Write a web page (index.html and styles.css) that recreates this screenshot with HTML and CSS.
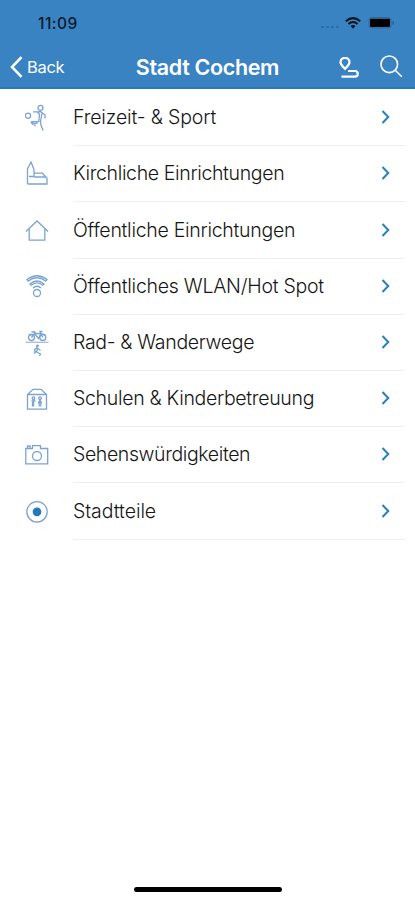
FILE: index.html
```html
<!DOCTYPE html>
<html lang="de">
<head>
<meta charset="utf-8">
<meta name="viewport" content="width=device-width, initial-scale=1">
<title>Stadt Cochem</title>
<link rel="stylesheet" href="styles.css">
</head>
<body>
<header class="header">
  <div class="status">
    <span class="time">11:09</span>
    <div class="status-icons">
      <span class="signal"><i></i><i></i><i></i><i></i></span>
      <svg class="wifi" viewBox="0 0 16 12" fill="none" stroke="#071523" stroke-width="2"><path d="M.8 4.200Q8-2 15.200 4.200M3.400 7Q8 3 12.600 7"/><path d="M5.500 9Q8 7 10.500 9L8 11.700Z" fill="#071523" stroke="none"/></svg>
      <svg class="battery" viewBox="0 0 26 12"><rect x=".5" y=".5" width="22" height="10.500" rx="2.500" fill="none" stroke="#2c689c"/><rect x="1.500" y="1.700" width="20" height="8.300" rx="1" fill="#000"/><path d="M24 4v4q1.500-.6 1.500-2T24 4" fill="#245b8b"/></svg>
    </div>
  </div>
  <nav class="nav">
    <a class="back"><svg class="back-icon" viewBox="0 0 13 22"><path d="M11.500 1.200 2 11l9.500 9.800"/></svg><span>Back</span></a>
    <h1 class="title">Stadt Cochem</h1>
    <div class="actions">
      <svg class="route" viewBox="0 0 20 22"><path d="M6 11.800C4.500 10 1.500 8 1.500 5.300a4.500 4.500 0 0 1 9 0C10.500 8 7.500 10 6 11.800Z"/><path d="M9 14h7a2.800 2.800 0 0 1 0 5.600H2.500"/></svg>
      <svg class="search" viewBox="0 0 23 23"><circle cx="9.300" cy="9.300" r="8.300"/><path d="m15.500 15.500 6.300 6.300"/></svg>
    </div>
  </nav>
</header>
<main class="list">
  <a class="row"><svg class="icon" viewBox="0 0 24 28"><circle cx="15.500" cy="3.800" r="2.500"/><circle cx="3" cy="11.700" r="2.600"/><path d="M8 7.800h4.500l3-.3 4.500 3.500v3.500M12.500 8.500l2 1.500-.7 7.500-6.800.2 3.500 4.500M17 9.500l-1.500 8 .6 4 2 5M6 18l1.500 2 5-1"/></svg><span class="cell"><span class="label l1">Freizeit- &amp; Sport</span><svg class="chevron" viewBox="0 0 9 14"><path d="m1.500 1 5.800 6-5.800 6"/></svg></span></a>
  <a class="row"><svg class="icon" viewBox="0 0 24 28"><path d="M2.500 24V9L6 2l3 7.500v3.700h8.500l4.500 5V24H2.500M9 13v3.500H4M9 17h12"/></svg><span class="cell"><span class="label l2">Kirchliche Einrichtungen</span><svg class="chevron" viewBox="0 0 9 14"><path d="m1.500 1 5.800 6-5.800 6"/></svg></span></a>
  <a class="row"><svg class="icon" viewBox="0 0 24 28"><path d="M1 14.500 12 4l11 10.500M4.200 11.800v11.400h15.600V11.800"/></svg><span class="cell"><span class="label l3">Öffentliche Einrichtungen</span><svg class="chevron" viewBox="0 0 9 14"><path d="m1.500 1 5.800 6-5.800 6"/></svg></span></a>
  <a class="row"><svg class="icon" viewBox="0 0 24 28"><path d="M2 6.500q10-7.500 20 0l-1.300 1.500q-8.700-6.500-17.400 0ZM5 11q7-6 14 0l-1.200 1.200q-5.800-4.800-11.600 0ZM8 15q4-3.500 8 0"/><circle cx="12" cy="20" r="3.500"/></svg><span class="cell"><span class="label l4">Öffentliches WLAN/Hot Spot</span><svg class="chevron" viewBox="0 0 9 14"><path d="m1.500 1 5.800 6-5.800 6"/></svg></span></a>
  <a class="row"><svg class="icon" viewBox="0 0 24 28"><circle cx="6.500" cy="8.500" r="3"/><circle cx="17.800" cy="8.500" r="3"/><path d="m6.500 8.500 3-4h6l2.300 4M9.500 4.500l4 5 2.500-5-1-2h2.500M6.500 3h4M4 5.500l4 .3M16.500 4.800l4 1"/><path d="M.5 13.300h23" opacity=".7"/><circle cx="12.500" cy="17" r=".8"/><path d="M12 18.500l-2.500 2 .5 2.500M12.500 18.500l-.8 4.500 3.800 2-1 2M11.700 22 9 24.500M13 19.500l2.500 2"/></svg><span class="cell"><span class="label l5">Rad- &amp; Wanderwege</span><svg class="chevron" viewBox="0 0 9 14"><path d="m1.500 1 5.800 6-5.800 6"/></svg></span></a>
  <a class="row"><svg class="icon" viewBox="0 0 24 28"><path d="M2.500 9.500v14.700h19V9.500ZM2.500 9.500 8 4.300h8l5.500 5.200"/><circle cx="8.500" cy="13.200" r="1.300"/><circle cx="15" cy="13.200" r="1.300"/><path d="M6.500 16h4M8.500 15v6.500M7.500 17v4.500M13 17.500h4M15 15l-1.500 2.500M15 15l1.500 2.500M14.200 17.500v4M15.800 17.500v4"/></svg><span class="cell"><span class="label l6">Schulen &amp; Kinderbetreuung</span><svg class="chevron" viewBox="0 0 9 14"><path d="m1.500 1 5.800 6-5.800 6"/></svg></span></a>
  <a class="row"><svg class="icon" viewBox="0 0 24 28"><path d="M.8 7.500h6.700V4.700h8v2.800h7.200v15.300H.8ZM2.500 7.500V5h2.500v2.500"/><circle cx="12" cy="15" r="4.500"/></svg><span class="cell"><span class="label l7">Sehenswürdigkeiten</span><svg class="chevron" viewBox="0 0 9 14"><path d="m1.500 1 5.800 6-5.800 6"/></svg></span></a>
  <a class="row"><svg class="icon" viewBox="0 0 24 28"><circle cx="12" cy="13.800" r="10.200"/><circle cx="12" cy="13.800" r="3.700" fill="#2479bd" stroke="#2479bd"/></svg><span class="cell"><span class="label l8">Stadtteile</span><svg class="chevron" viewBox="0 0 9 14"><path d="m1.500 1 5.800 6-5.800 6"/></svg></span></a>
</main>
<footer class="footer"><div class="home"></div></footer>
</body>
</html>
```
FILE: styles.css
```css
* { box-sizing: border-box; }
body {
  margin: 0;
  height: 900px;
  display: flex;
  flex-direction: column;
  background: #fff;
  color: #161616;
  font-family: Inter, "Liberation Sans", sans-serif;
  overflow: hidden;
}
svg { display: block; flex: none; }
.header {
  height: 88.500px;
  background: #3983c2;
  border-bottom: 2px solid #2779bc;
}
.status {
  height: 45px;
  display: flex;
  justify-content: space-between;
  padding: 0 20px 0 38px;
  align-items: center;
}
.time { font-size: 15.500px; font-weight: 500; letter-spacing: .5px; padding-top: 1px; color: #071a2c; }
.status-icons { display: flex; align-items: center; }
.signal { display: flex; gap: 2px; margin: 8px 6px 0 0; }
.signal i { width: 3px; height: 2px; background: #2f6fa6; }
.wifi { width: 16px; height: 12px; margin-right: 7px; }
.battery { width: 27px; height: 12px; }
.nav {
  height: 43px;
  display: grid;
  grid-template-columns: 100px 1fr 100px;
  align-items: center;
  padding: 0 12px 0 10px;
  color: #fff;
}
.back { display: flex; align-items: center; gap: 4px; font-size: 16.500px; letter-spacing: -.3px; }
.back-icon { width: 13px; height: 22px; fill: none; stroke: #fff; stroke-width: 2.600; }
.title { margin: 0; padding-left: 2px; font-size: 21.500px; font-weight: 600; letter-spacing: -.35px; text-align: center; white-space: nowrap; }
.actions { display: flex; justify-content: flex-end; gap: 21px; align-items: center; }
.actions svg { fill: none; stroke: #fff; }
.route { width: 20px; height: 22px; margin-top: 2px; stroke-width: 2.200; }
.search { width: 23px; height: 23px; stroke-width: 1.600; }
.list { padding-top: 1.600px; }
.row {
  height: 56.200px;
  display: flex;
  align-items: center;
  padding: 0 10px 0 25px;
}
.icon {
  width: 24px;
  height: 28px;
  margin-right: 24px;
  fill: none;
  stroke: #7ba4d2;
  stroke-width: 1.300;
}
.cell {
  flex: 1;
  height: 100%;
  display: flex;
  align-items: center;
  justify-content: space-between;
  border-bottom: 1px solid #f0f0f0;
}
.label { font-size: 19.500px; font-weight: 300; white-space: nowrap; padding-bottom: 1px; }
.l1 { letter-spacing: -.15px; }
.l2 { letter-spacing: -.36px; }
.l3 { letter-spacing: -.28px; }
.l4 { letter-spacing: -.25px; }
.l5 { letter-spacing: -.33px; }
.l6 { letter-spacing: -.31px; }
.l7 { letter-spacing: -.39px; }
.l8 { letter-spacing: -.07px; }
.chevron {
  width: 9px;
  height: 14px;
  margin: 0 15px 1px 0;
  fill: none;
  stroke: #2980c0;
  stroke-width: 2;
}
.footer { margin-top: auto; height: 13px; display: flex; justify-content: center; }
.home { width: 148px; height: 5px; border-radius: 3px; background: #000; }
```
